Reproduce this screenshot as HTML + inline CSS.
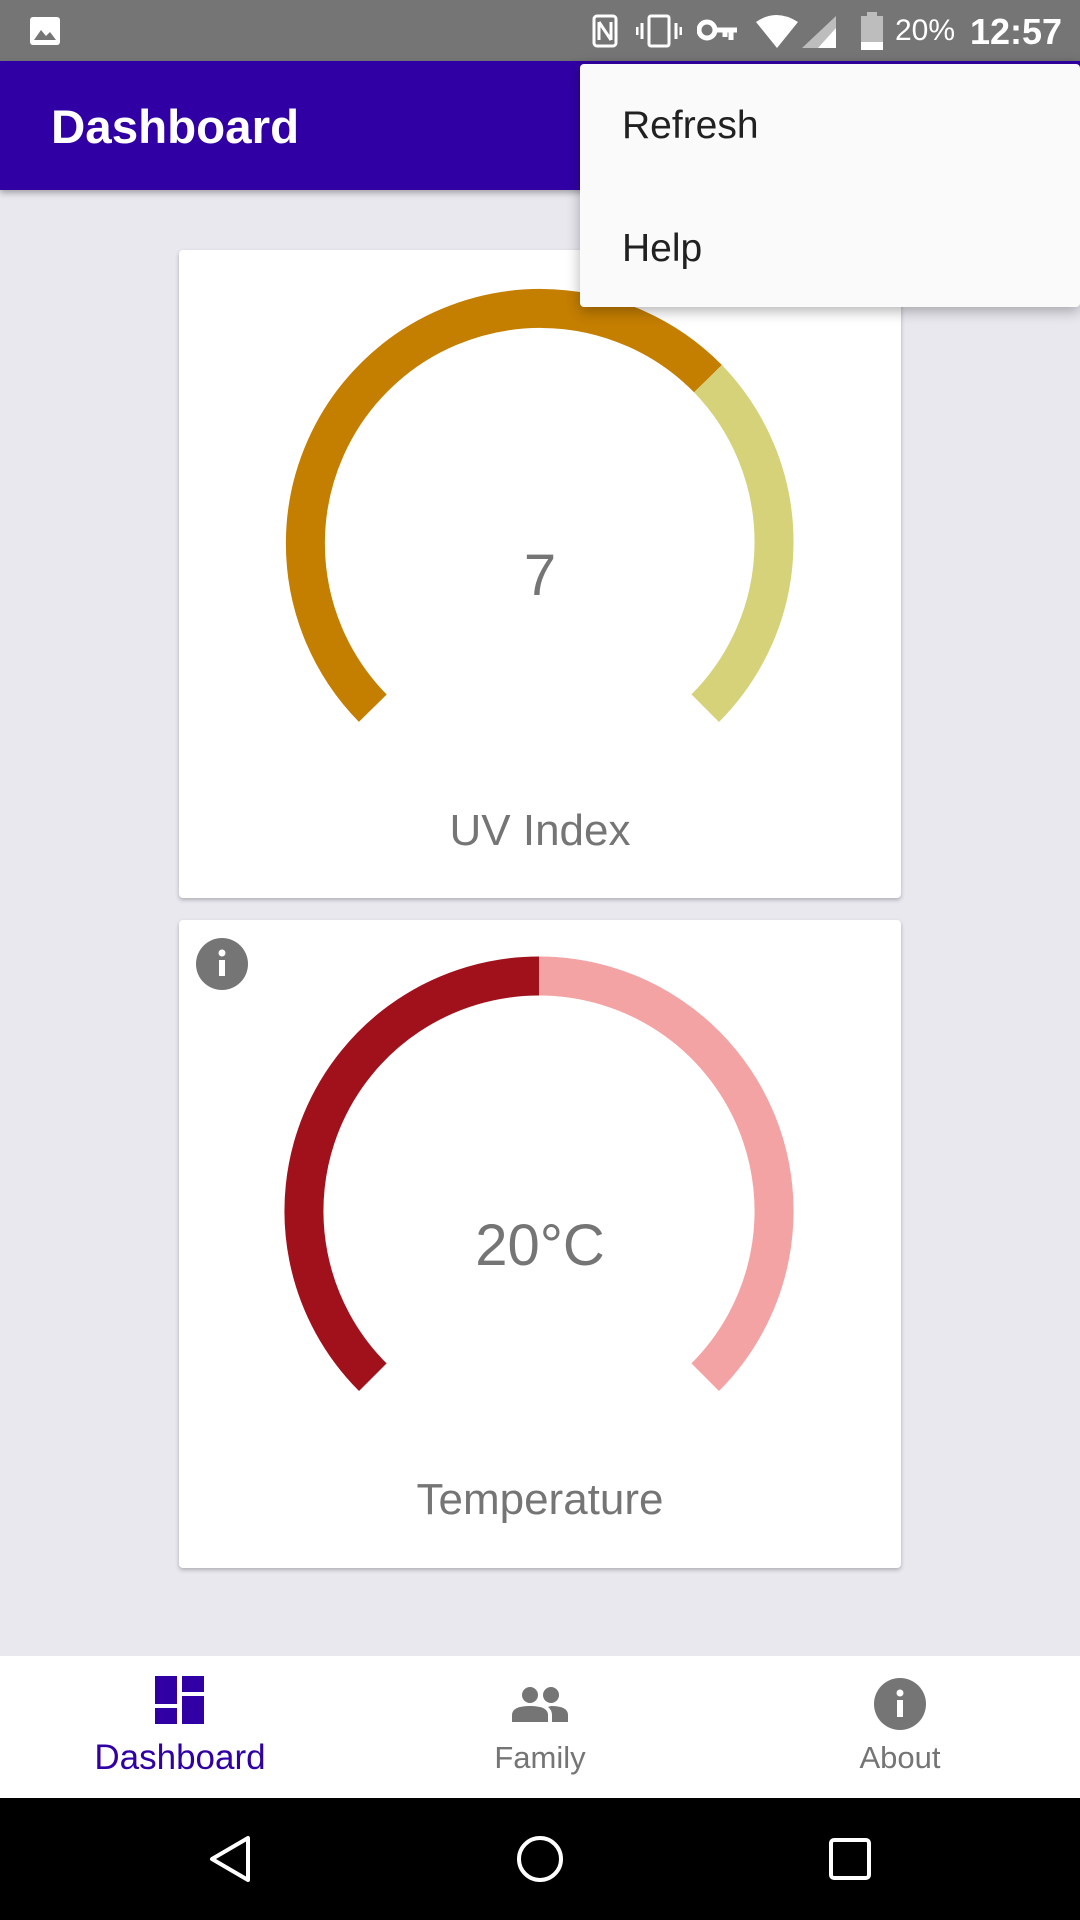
<!DOCTYPE html>
<html><head><meta charset="utf-8"><style>
*{margin:0;padding:0;box-sizing:border-box}
body{width:1080px;height:1920px;background:#E9E8EF;font-family:"Liberation Sans",Roboto,sans-serif;position:relative;overflow:hidden}
.abs{position:absolute}
.status{left:0;top:0;width:1080px;height:61px;background:#757575;color:#fff}
.appbar{left:0;top:61px;width:1080px;height:129px;background:#3100A5;box-shadow:0 3px 6px rgba(0,0,0,.3)}
.appbar span{position:absolute;left:51px;top:39px;font-size:47.5px;font-weight:bold;color:#fff}
.card{left:179px;width:722px;height:648px;background:#fff;border-radius:4px;box-shadow:0 2px 4px rgba(0,0,0,.25)}
.val{position:absolute;left:0;width:100%;text-align:center;font-size:58px;color:#757575}
.lbl{position:absolute;left:0;width:100%;text-align:center;font-size:44px;color:#757575}
.menu{left:580px;top:64px;width:500px;height:243px;background:#FAFAFA;border-radius:4px;box-shadow:0 4px 14px rgba(0,0,0,.3)}
.menu div{position:absolute;left:42px;font-size:39px;color:#212121}
.bnav{left:0;top:1656px;width:1080px;height:142px;background:#fff}
.bnav .t{position:absolute;font-size:31px;color:#757575;text-align:center;width:300px}
.sys{left:0;top:1798px;width:1080px;height:122px;background:#000}
</style></head><body>
<div class="abs status">
<svg class="abs" style="left:29px;top:16px" width="32" height="30"><rect x="1" y="1" width="30" height="28" rx="3" fill="#fff"/><path d="M5 24 L12 14 L17 20 L21 16 L27 24Z" fill="#757575"/></svg>
<svg class="abs" style="left:592px;top:14px" width="26" height="34"><rect x="2" y="2" width="22" height="30" rx="3" fill="none" stroke="#fff" stroke-width="3"/><path d="M7 8 L19 26 M7 8 V26 M19 8V26" stroke="#fff" stroke-width="3"/></svg>
<svg class="abs" style="left:636px;top:14px" width="46" height="34"><rect x="13" y="2" width="20" height="30" rx="2" fill="none" stroke="#fff" stroke-width="3"/><path d="M6 9V25 M1 13V21 M40 9V25 M45 13V21" stroke="#fff" stroke-width="3"/></svg>
<svg class="abs" style="left:697px;top:18px" width="42" height="24"><circle cx="10" cy="12" r="8" fill="none" stroke="#fff" stroke-width="5"/><path d="M18 12H40 M34 12V22 M28 12V19" stroke="#fff" stroke-width="5"/></svg>
<svg class="abs" style="left:756px;top:14px" width="82" height="36"><path d="M0 8 Q20 -6 42 8 L21 34Z" fill="#fff"/><path d="M80 2 V34 H46Z" fill="#bdbdbd"/><path d="M80 14 V34 H62 Z" fill="#fff"/></svg>
<svg class="abs" style="left:860px;top:12px" width="24" height="38"><rect x="7" y="0" width="10" height="4" fill="#bdbdbd"/><rect x="1" y="4" width="22" height="34" fill="#bdbdbd"/><rect x="1" y="30" width="22" height="8" fill="#fff"/></svg>
<div class="abs" style="left:895px;top:14px;font-size:30px">20%</div>
<div class="abs" style="left:970px;top:11px;font-size:36px;font-weight:bold">12:57</div>
</div>
<div class="abs appbar"><span>Dashboard</span></div>

<div class="abs card" style="top:250px">
<svg class="abs" style="left:0;top:0" width="722" height="648">
<g transform="translate(360,292)" fill="none" stroke-width="39">
<path d="M-166.2 166.2 A235 235 0 1 1 169 -163.3" stroke="#C47E00"/>
<path d="M169 -163.3 A235 235 0 0 1 166.2 166.2" stroke="#D5D27A"/>
</g></svg>
<div class="val" style="top:292px">7</div>
<div class="lbl" style="top:556px">UV Index</div>
</div>

<div class="abs card" style="top:920px">
<svg class="abs" style="left:0;top:0" width="722" height="648">
<g transform="translate(360,291)" fill="none" stroke-width="39">
<path d="M-166.2 166.2 A235 235 0 0 1 0 -235" stroke="#A0111C"/>
<path d="M0 -235 A235 235 0 0 1 166.2 166.2" stroke="#F4A3A4"/>
</g>
<circle cx="43" cy="44" r="26" fill="#757575"/><circle cx="43" cy="33" r="3.5" fill="#fff"/><rect x="40" y="40" width="6" height="16" fill="#fff"/>
</svg>
<div class="val" style="top:292px">20°C</div>
<div class="lbl" style="top:555px">Temperature</div>
</div>

<div class="abs menu"><div style="top:40px">Refresh</div><div style="top:163px">Help</div></div>

<div class="abs bnav">
<svg class="abs" style="left:155px;top:20px" width="50" height="48" fill="#3100A5"><rect x="0" y="0" width="22" height="28"/><rect x="0" y="32" width="22" height="16"/><rect x="27" y="0" width="22" height="16"/><rect x="27" y="20" width="22" height="28"/></svg>
<div class="t" style="left:30px;top:82px;color:#3100A5;font-size:35px">Dashboard</div>
<svg class="abs" style="left:510px;top:30px" width="60" height="36" fill="#757575"><circle cx="20" cy="9" r="8"/><circle cx="41" cy="9" r="8"/><path d="M2 36 V29 Q2 20 20 20 Q38 20 38 29 V36Z"/><path d="M41 20 Q58 20 58 29 V36 H42 V29 Q42 24 38 21Z"/></svg>
<div class="t" style="left:390px;top:84px">Family</div>
<svg class="abs" style="left:874px;top:22px" width="52" height="52"><circle cx="26" cy="26" r="26" fill="#757575"/><circle cx="26" cy="15" r="3.5" fill="#fff"/><rect x="23" y="22" width="6" height="17" fill="#fff"/></svg>
<div class="t" style="left:750px;top:84px">About</div>
</div>

<div class="abs sys">
<svg class="abs" style="left:205px;top:36px" width="50" height="50"><path d="M43 4 V46 L7 25Z" fill="none" stroke="#fff" stroke-width="4" stroke-linejoin="round"/></svg>
<svg class="abs" style="left:515px;top:36px" width="50" height="50"><circle cx="25" cy="25" r="21" fill="none" stroke="#fff" stroke-width="4"/></svg>
<svg class="abs" style="left:828px;top:39px" width="44" height="44"><rect x="3" y="3" width="38" height="38" rx="3" fill="none" stroke="#fff" stroke-width="4"/></svg>
</div>
</body></html>
